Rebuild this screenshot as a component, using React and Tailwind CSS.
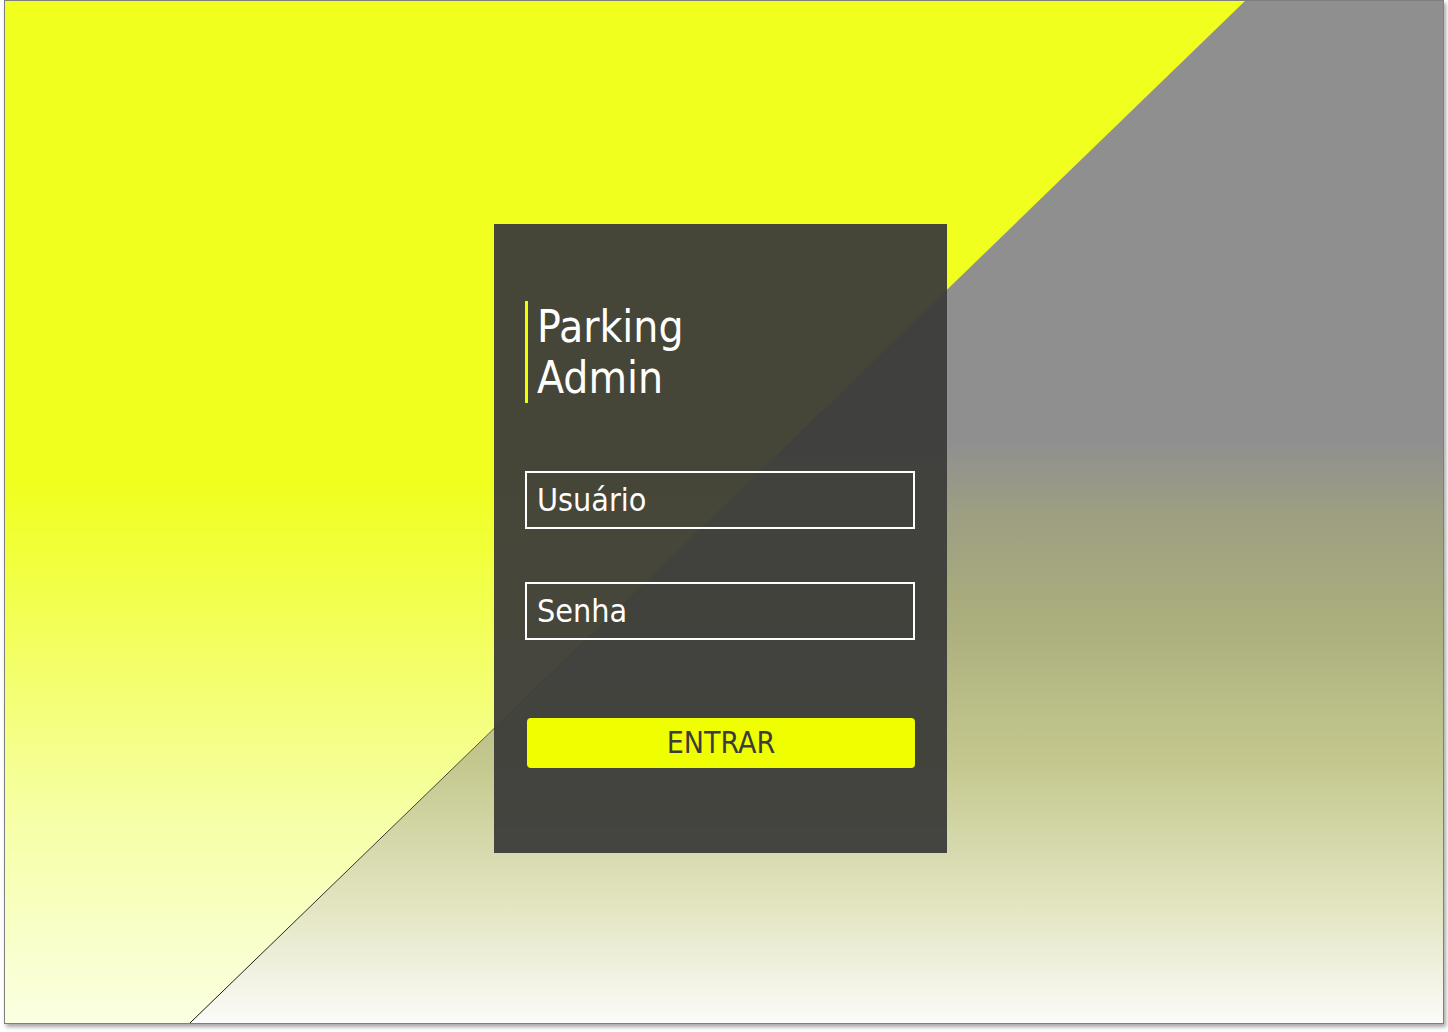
import React from 'react';

const font = "font-['DejaVu_Sans_Condensed','Liberation_Sans_Narrow',Roboto,sans-serif]";

export default function App() {
  return (
    <div className="w-full h-[1032px] bg-white">
      <div className="relative ml-[4px] w-[1440px] h-[1024px] border border-black/50 shadow-[2px_3px_4px_rgba(0,0,0,0.35)] overflow-hidden">
        {/* yellow side */}
        <div className="absolute inset-0 bg-[linear-gradient(to_bottom,#f0ff1e_0%,#f0ff1e_47%,#f3ff60_63%,#f6ffa3_79%,#fbffe2_100%)]" />
        {/* grey side */}
        <div className="absolute inset-0 [clip-path:polygon(1240px_0,100%_0,100%_100%,185px_100%)] bg-[linear-gradient(to_bottom,#8f8f8f_0%,#8f8f8f_43%,#9d9e83_50%,#aaad7c_60%,#c5c98f_75%,#e4e6c3_89%,#fbfbf8_100%)]" />
        <svg className="absolute inset-0" width="1438" height="1022">
          <defs>
            <linearGradient id="ln" x1="0" y1="0" x2="0" y2="1022" gradientUnits="userSpaceOnUse">
              <stop offset="0.55" stopColor="#222" stopOpacity="0" />
              <stop offset="0.75" stopColor="#222" stopOpacity="0.8" />
              <stop offset="1" stopColor="#111" stopOpacity="1" />
            </linearGradient>
          </defs>
          <line x1="1240" y1="0" x2="185" y2="1022" stroke="url(#ln)" strokeWidth="1" />
        </svg>

        <div className="relative flex pl-[489px] pt-[223px]">
          <div className={`w-[453px] h-[629px] bg-[#3c3c3a]/95 pl-[31px] pr-[32px] pt-[77px] flex flex-col ${font}`}>
            <div className="border-l-[3px] border-[#efff00] pl-[9px] text-white text-[44px] leading-[51px] h-[102px]">
              <div>Parking</div>
              <div>Admin</div>
            </div>
            <input
              className="mt-[68px] h-[58px] w-full border-2 border-white bg-transparent px-[10px] text-[32px] text-white placeholder:text-white outline-none"
              placeholder="Usuário"
            />
            <input
              type="password"
              className="mt-[53px] h-[58px] w-full border-2 border-white bg-transparent px-[10px] text-[32px] text-white placeholder:text-white outline-none"
              placeholder="Senha"
            />
            <button className="mt-[78px] ml-[2px] h-[50px] rounded-[4px] bg-[#efff00] text-[30px] text-[#3c3c3a] leading-none">
              ENTRAR
            </button>
          </div>
        </div>
      </div>
    </div>
  );
}
